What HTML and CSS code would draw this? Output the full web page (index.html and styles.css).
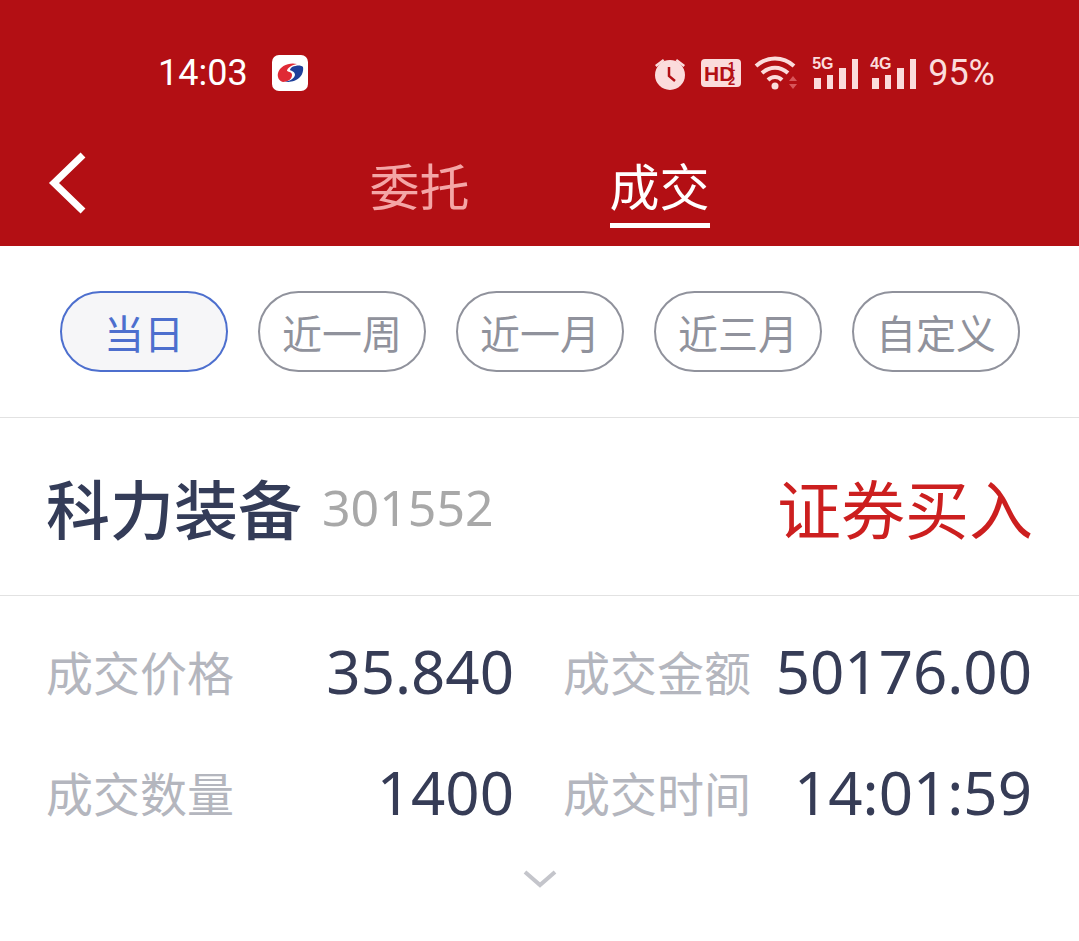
FILE: index.html
```html
<!DOCTYPE html>
<html lang="zh-CN">
<head>
    <meta charset="UTF-8" />
    <meta name="viewport" content="width=device-width, initial-scale=1.0"/>
    <title>成交</title>
    <link rel="stylesheet" href="styles.css">
</head>
<body>
<header class="top">
    <div class="status">
        <div class="status-left">
            <span class="time">14:03</span>
            <svg class="app-logo" width="36" height="36" viewBox="0 0 36 36">
                <rect width="36" height="36" rx="7" fill="#fff"/>
                <path d="M25 9C17 7 8 11 6 18c-1 4 1 8 5 9 5 0 9-3 9-7 0-3-3-3-5-4 0-3 5-6 10-7z" fill="#e02a35"/>
                <path d="M20 12c5-2 9-2 11 0 1 5-2 11-7 13-4 2-9 2-11 2 4-1 9-3 10-7 0-3-3-4-5-5 0-1 1-2 2-3z" fill="#1f3f9a"/>
            </svg>
        </div>
        <div class="status-right">
            <svg width="36" height="36" viewBox="0 0 36 36" fill="#fbdcdc">
                <circle cx="18" cy="20" r="15"/>
                <path d="M3 10l8-6 1.500 2-8 6zM33 10l-8-6-1.500 2 8 6z"/>
                <path d="M17 12v9l6 5" fill="none" stroke="#b30f14" stroke-width="2.500"/>
            </svg>
            <svg class="hd" width="42" height="30" viewBox="0 0 42 30">
                <rect x="1" y="1" width="40" height="28" rx="4" fill="#fbdcdc"/>
                <text x="4" y="23" class="hd-text">HD</text>
                <text x="28" y="13" class="hd-small">1</text>
                <text x="28" y="27" class="hd-small">2</text>
            </svg>
            <svg class="wifi" width="46" height="36" viewBox="0 0 46 36" fill="none" stroke="#fbdcdc" stroke-width="4">
                <path d="M2 11c11-10 27-10 38 0M8 18c8-7 18-7 26 0M14 25c4-4 10-4 14 0"/>
                <circle cx="21" cy="31" r="3.500" fill="#fbdcdc" stroke="none"/>
                <path d="M35 26l4-5 4 5zM35 29l4 5 4-5z" fill="#d8565a" stroke="none"/>
            </svg>
            <div class="signal">
                <span class="net">5G</span>
                <i class="b1"></i><i class="b2"></i><i class="b3"></i><i class="b4"></i>
            </div>
            <div class="signal">
                <span class="net">4G</span>
                <i class="b1"></i><i class="b2"></i><i class="b3"></i><i class="b4"></i>
            </div>
            <span class="battery">95%</span>
        </div>
    </div>
    <nav class="tabs">
        <svg class="back" width="40" height="62" viewBox="0 0 40 62" fill="none" stroke="#fff" stroke-width="7">
            <path d="M35 3L6 31l29 28"/>
        </svg>
        <button class="tab">委托</button>
        <button class="tab active">成交</button>
    </nav>
</header>

<div class="filters">
    <button class="pill active">当日</button>
    <button class="pill">近一周</button>
    <button class="pill">近一月</button>
    <button class="pill">近三月</button>
    <button class="pill">自定义</button>
</div>

<section class="title-row">
    <div class="stock">
        <span class="stock-name">科力装备</span>
        <span class="stock-code">301552</span>
    </div>
    <span class="trade-type">证券买入</span>
</section>

<section class="details">
    <div class="cell">
        <span class="label">成交价格</span>
        <span class="value price">35.840</span>
    </div>
    <div class="cell">
        <span class="label">成交金额</span>
        <span class="value amount">50176.00</span>
    </div>
    <div class="cell">
        <span class="label">成交数量</span>
        <span class="value qty">1400</span>
    </div>
    <div class="cell">
        <span class="label">成交时间</span>
        <span class="value clock">14:01:59</span>
    </div>
</section>

<div class="more">
    <svg width="34" height="18" viewBox="0 0 34 18" fill="none" stroke="#c4c5cb" stroke-width="4">
        <path d="M2 2l15 13L32 2"/>
    </svg>
</div>
</body>
</html>
```

FILE: styles.css
```css
* {
    box-sizing: border-box;
}

body {
    margin: 0;
    background: #fff;
    font-family: "Noto Sans", "Noto Sans CJK SC", sans-serif;
    color: #363c56;
}

button {
    font: inherit;
    background: none;
    border: none;
    padding: 0;
}

.top {
    height: 246px;
    background-color: #b30f14;
}

.status {
    height: 146px;
    display: flex;
    justify-content: space-between;
    align-items: center;
    padding: 0 84px 0 158px;
}

.status-left,
.status-right {
    display: flex;
    align-items: center;
}

.status-left {
    gap: 24px;
}

.status-right {
    gap: 12px;
}

.time {
    font-family: Roboto, sans-serif;
    font-size: 36px;
    color: #fff;
}

.hd-text {
    font-family: "Liberation Sans", sans-serif;
    font-weight: bold;
    font-size: 21px;
    fill: #b30f14;
}

.hd-small {
    font-family: "Liberation Sans", sans-serif;
    font-weight: bold;
    font-size: 13px;
    fill: #b30f14;
}

.signal {
    position: relative;
    width: 46px;
    height: 32px;
    display: flex;
    align-items: flex-end;
    gap: 6px;
    padding-left: 2px;
}

.signal i {
    display: block;
    width: 7px;
    background: #fbdcdc;
}

.signal .b1 { height: 11px; }
.signal .b2 { height: 14px; }
.signal .b3 { height: 21px; }
.signal .b4 { height: 30px; }

.net {
    position: absolute;
    left: 0;
    top: -2px;
    font-family: "Liberation Sans", sans-serif;
    font-weight: bold;
    font-size: 16px;
    color: #fbdcdc;
}

.battery {
    font-family: Roboto, sans-serif;
    font-size: 36px;
    color: #fbdcdc;
}

.tabs {
    position: relative;
    height: 100px;
    display: flex;
    justify-content: center;
    gap: 140px;
}

.back {
    position: absolute;
    left: 48px;
    top: 6px;
}

.tab {
    width: 100px;
    height: 82px;
    font-size: 50px;
    line-height: 82px;
    color: #f4a6a6;
    text-align: center;
}

.tab.active {
    color: #fff;
    border-bottom: 5px solid #fff;
}

.filters {
    height: 172px;
    padding: 45px 0 0 60px;
    display: flex;
    gap: 30px;
    border-bottom: 1px solid #e2e2e2;
}

.pill {
    width: 168px;
    height: 81px;
    border: 2px solid #90929c;
    border-radius: 41px;
    font-size: 40px;
    color: #90929c;
}

.pill.active {
    border-color: #4d6fce;
    background: #f6f6f8;
    color: #4d6fce;
}

.title-row {
    height: 178px;
    padding: 0 46px;
    display: flex;
    justify-content: space-between;
    align-items: center;
    border-bottom: 1px solid #e2e2e2;
}

.stock {
    display: flex;
    align-items: center;
    gap: 20px;
}

.stock-name {
    font-size: 64px;
    font-weight: 500;
    color: #343c58;
}

.stock-code {
    font-size: 50px;
    color: #a8a8a8;
}

.trade-type {
    font-size: 64px;
    color: #cc1f1f;
}

.details {
    display: grid;
    grid-template-columns: 468px 469px;
    column-gap: 49px;
    padding: 14px 0 0 46px;
}

.cell {
    height: 121px;
    display: flex;
    justify-content: space-between;
    align-items: center;
}

.label {
    font-size: 47px;
    color: #b4b6be;
}

.value {
    color: #363c56;
    font-size: 60px;
}

.more {
    display: flex;
    justify-content: center;
    padding-top: 18px;
}
```
